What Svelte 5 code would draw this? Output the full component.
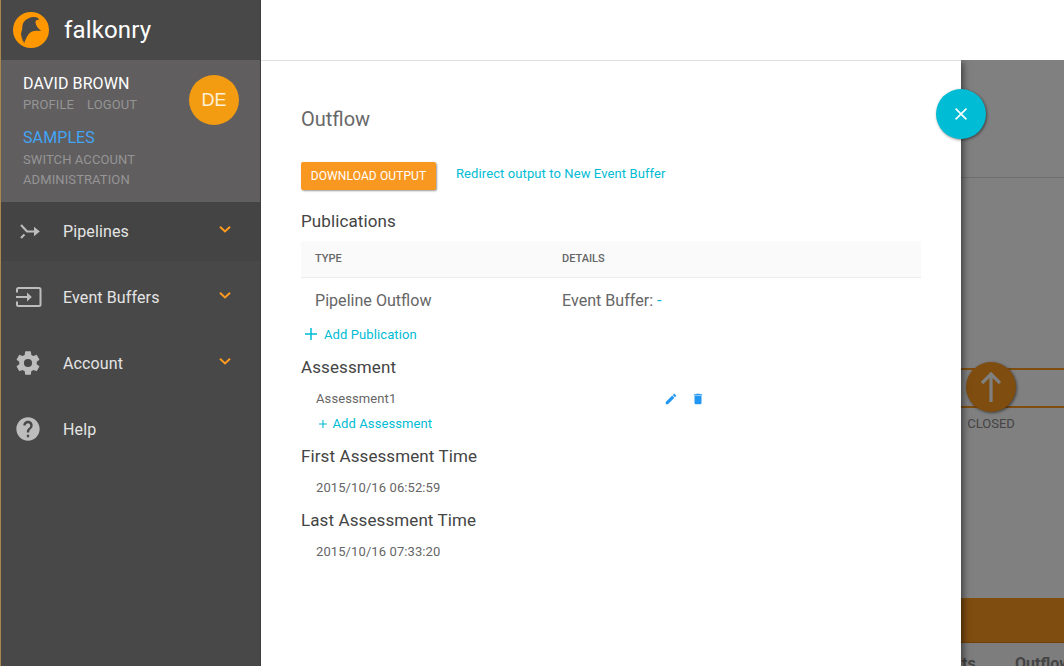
<script>
  const menu = [
    { icon: 'pipelines', label: 'Pipelines', expandable: true, active: true },
    { icon: 'buffers', label: 'Event Buffers', expandable: true },
    { icon: 'account', label: 'Account', expandable: true },
    { icon: 'help', label: 'Help' }
  ];
  const times = [
    { title: 'First Assessment Time', value: '2015/10/16 06:52:59' },
    { title: 'Last Assessment Time', value: '2015/10/16 07:33:20' }
  ];
</script>

<div class="app">
  <aside>
    <div class="brand">
      <svg width="36" height="36" viewBox="0 0 36 36">
        <circle cx="18" cy="18" r="18" fill="#ff9800" />
        <path fill="#484848" d="M8.300 20C10 17 8.500 14.500 10.500 10.500C12.500 7.200 16.500 5.500 20 5C23 4.600 25.800 5.600 26.300 8.300C24.500 7 22.300 8.300 22.500 10.500C22.800 13.500 25 17 28.300 18.700C25 19 21.500 18.300 18.500 19.700C14.500 22 13 26.500 11 31.400L10.300 28.500L9.500 29L9.300 26L8.500 26.300L8.700 23.500L7.900 23.700Z" />
      </svg>
      <span>falkonry</span>
    </div>
    <div class="user">
      <div class="info">
        <div class="name">DAVID BROWN</div>
        <div class="links"><span>PROFILE</span><span>LOGOUT</span></div>
        <div class="account">SAMPLES</div>
        <div class="sub switch">SWITCH ACCOUNT</div>
        <div class="sub admin">ADMINISTRATION</div>
      </div>
      <div class="avatar">DE</div>
    </div>
    <nav>
      {#each menu as item}
        <div class="item" class:active={item.active}>
          <div class="icon">
            {#if item.icon === 'pipelines'}
              <svg width="28" height="28" viewBox="0 0 28 28"><path d="M7 8L13 14.500H20.500M7 21L10.500 17.500" fill="none" stroke="#bdbdbd" stroke-width="2.100" /><path d="M20 9.700L25.800 14.500L20 19.300Z" fill="#bdbdbd" /></svg>
            {:else if item.icon === 'buffers'}
              <svg width="28" height="28" viewBox="0 0 28 28"><path d="M3 9.500V6.500Q3 5 4.500 5H25Q26.500 5 26.500 6.500V21.500Q26.500 23 25 23H4.500Q3 23 3 21.500V18.500M2 14H14" fill="none" stroke="#bdbdbd" stroke-width="2" /><path d="M13 9.500L17.800 14L13 18.500Z" fill="#bdbdbd" /></svg>
            {:else if item.icon === 'account'}
              <svg width="28" height="28" viewBox="0 0 24 24"><path fill="#bdbdbd" d="M19.430 12.980c.040-.320.070-.640.070-.980s-.030-.660-.070-.980l2.110-1.650c.190-.150.240-.420.120-.640l-2-3.460c-.120-.220-.390-.300-.610-.220l-2.490 1c-.520-.400-1.080-.730-1.690-.980l-.380-2.650C14.460 2.180 14.250 2 14 2h-4c-.250 0-.460.180-.490.420l-.380 2.650c-.610.250-1.170.590-1.690.980l-2.490-1c-.230-.090-.490 0-.610.220l-2 3.460c-.130.220-.070.490.120.640l2.110 1.650c-.040.320-.070.650-.070.980s.030.660.070.980l-2.110 1.650c-.190.150-.240.420-.120.640l2 3.460c.120.220.390.300.610.220l2.490-1c.520.400 1.080.730 1.690.980l.380 2.650c.030.240.240.420.490.420h4c.250 0 .460-.180.490-.420l.380-2.650c.610-.250 1.170-.590 1.690-.980l2.490 1c.230.090.490 0 .610-.220l2-3.460c.120-.220.070-.490-.120-.640zM12 15.500a3.500 3.500 0 1 1 0-7 3.500 3.500 0 0 1 0 7z" /></svg>
            {:else}
              <svg width="28" height="28" viewBox="0 0 24 24"><path fill="#bdbdbd" d="M12 2C6.480 2 2 6.480 2 12s4.480 10 10 10 10-4.480 10-10S17.520 2 12 2zm1 17h-2v-2h2v2zm2.070-7.750l-.900.920C13.450 12.900 13 13.500 13 15h-2v-.500c0-1.100.450-2.100 1.170-2.830l1.240-1.260c.370-.360.590-.860.590-1.410 0-1.100-.900-2-2-2s-2 .900-2 2H8c0-2.210 1.790-4 4-4s4 1.790 4 4c0 .880-.360 1.680-.930 2.250z" /></svg>
            {/if}
          </div>
          <span class="label">{item.label}</span>
          {#if item.expandable}
            <svg class="chevron" width="12" height="8" viewBox="0 0 12 8"><path d="M1 1.700L6 6.500L11 1.700" fill="none" stroke="#ff9c20" stroke-width="1.900" /></svg>
          {/if}
        </div>
      {/each}
    </nav>
  </aside>

  <main>
    <header></header>
    <div class="body">
      <section class="panel">
        <h1>Outflow</h1>
        <div class="actions">
          <button>DOWNLOAD OUTPUT</button>
          <span class="redirect">Redirect output to New Event Buffer</span>
        </div>

        <h2 class="publications">Publications</h2>
        <div class="table">
          <div class="tr th"><span>TYPE</span><span>DETAILS</span></div>
          <div class="tr td"><span>Pipeline Outflow</span><span>Event Buffer: <i>-</i></span></div>
        </div>
        <div class="add pub">
          <svg width="12" height="12" viewBox="0 0 12 12"><path d="M6 0V12M0 6H12" stroke="#00bcd4" stroke-width="1.500" /></svg>
          <span>Add Publication</span>
        </div>

        <h2>Assessment</h2>
        <div class="entry">
          <span>Assessment1</span>
          <svg class="pencil" width="14" height="14" viewBox="0 0 24 24"><path fill="#2196f3" d="M3 17.250V21h3.750L17.810 9.940l-3.750-3.750L3 17.250zM20.710 7.040c.390-.390.390-1.020 0-1.410l-2.340-2.340c-.390-.390-1.020-.390-1.410 0l-1.830 1.830 3.750 3.750 1.830-1.830z" /></svg>
          <svg width="14" height="14" viewBox="0 0 24 24"><path fill="#2196f3" d="M6 19c0 1.100.900 2 2 2h8c1.100 0 2-.900 2-2V7H6v12zM19 4h-3.500l-1-1h-5l-1 1H5v2h14V4z" /></svg>
        </div>
        <div class="add assess">
          <svg width="8" height="8" viewBox="0 0 8 8"><path d="M4 0V8M0 4H8" stroke="#00bcd4" stroke-width="1.100" /></svg>
          <span>Add Assessment</span>
        </div>

        {#each times as t}
          <h2 class="time">{t.title}</h2>
          <div class="value">{t.value}</div>
        {/each}

        <div class="close">
          <svg width="12" height="12" viewBox="0 0 12 12"><path d="M.6.6L11.400 11.400M11.400.6L.6 11.400" stroke="#fff" stroke-width="1.600" /></svg>
        </div>
      </section>

      <div class="backdrop">
        <div class="strip"></div>
        <div class="flow">
          <div class="pipe"></div>
          <div class="node">
            <div class="disc">
              <svg width="20" height="30" viewBox="0 0 20 30"><path d="M10 30V2M1 11L10 2L19 11" fill="none" stroke="#808080" stroke-width="3.200" /></svg>
            </div>
            <span>CLOSED</span>
          </div>
        </div>
        <div class="bar"></div>
        <div class="tabs"><span class="t1">ts</span><span>Outflow</span></div>
      </div>
    </div>
  </main>
</div>

<style>
  :global(body) { margin: 0; overflow: hidden; }
  .app { display: flex; width: 1064px; height: 666px; overflow: hidden; font-family: Roboto, sans-serif; background: #fff; white-space: nowrap; }
  aside { box-sizing: border-box; width: 261px; flex: none; background: #484848; border-left: 1px solid #a88850; border-right: 1px solid #3e3e3e; }
  .brand { display: flex; align-items: center; height: 60px; padding-left: 12px; gap: 15px; color: #fff; font-size: 24px; letter-spacing: .15px; }
  .brand svg { flex: none; }
  .user { display: flex; justify-content: space-between; height: 142px; background: #605e5f; padding: 0 21px 0 22px; }
  .info { padding-top: 14px; }
  .name { color: #fff; font-size: 16px; line-height: 20px; letter-spacing: .08px; }
  .links { display: flex; gap: 13px; font-size: 13px; line-height: 20px; color: #969596; padding-top: 1px; letter-spacing: .1px; }
  .account { color: #42a5f5; font-size: 16px; line-height: 20px; margin-top: 13px; letter-spacing: .1px; }
  .sub { font-size: 13px; line-height: 20px; color: #969596; letter-spacing: .1px; }
  .switch { margin-top: 2px; }
  .avatar { width: 50px; height: 50px; margin-top: 15px; border-radius: 50%; background: #f39c12; color: #fdf0d8; font-family: "Liberation Sans", sans-serif; font-size: 18px; line-height: 50px; text-align: center; }
  .item { display: flex; align-items: center; height: 59px; margin-bottom: 7px; color: #e4e4e4; }
  .active { background: #444; }
  .icon { width: 28px; height: 28px; margin: -1px 0 0 13px; }
  .icon svg { display: block; }
  .label { margin-left: 21px; font-size: 16px; flex: 1; letter-spacing: .12px; }
  .chevron { margin: 0 29px 5px 0; }

  main { flex: 1; display: flex; flex-direction: column; min-width: 0; }
  header { height: 60px; }
  .body { flex: 1; display: flex; }
  .panel { position: relative; box-sizing: border-box; width: 700px; flex: none; border-top: 1px solid #e0e0e0; background: #fff; padding: 46px 40px 0; box-shadow: 2px 2px 7px rgba(0,0,0,.55); clip-path: inset(0 -30px 0 0); z-index: 1; }
  h1 { margin: 0; font-weight: 400; font-size: 20px; line-height: 24px; color: #686868; }
  .actions { display: flex; margin-top: 31px; gap: 20px; }
  button { border: 0; border-radius: 2px; width: 135px; height: 28px; padding: 0; background: #f99820; color: #fff; font: 12px Roboto, sans-serif; letter-spacing: .1px; box-shadow: 1px 1px 2px rgba(0,0,0,.4); }
  .redirect { color: #00bcd4; font-size: 13px; line-height: 24px; letter-spacing: .1px; }
  h2 { margin: 0; font-weight: 400; font-size: 17px; line-height: 24px; color: #444; letter-spacing: .1px; }
  .publications { margin-top: 19px; }
  .table { margin-top: 8px; }
  .tr { display: grid; grid-template-columns: 247px 1fr; padding-left: 14px; align-items: center; color: #666; }
  .th { height: 36px; background: #fafafa; border-bottom: 1px solid #ececec; font-size: 11px; font-weight: 500; }
  .th span { padding-bottom: 2px; }
  .td { height: 44px; font-size: 16.100px; }
  i { color: #00bcd4; font-style: normal; }
  .add { display: flex; align-items: center; color: #00bcd4; font-size: 13px; line-height: 20px; letter-spacing: .1px; }
  .pub { gap: 7px; padding: 3px 0 0 4px; margin-bottom: 10px; }
  .pub svg { margin-bottom: 2px; }
  .entry { display: flex; align-items: center; width: 389px; margin: 9px 0 0 15px; height: 20px; font-size: 13px; color: #666; letter-spacing: .1px; }
  .entry span { flex: 1; }
  .pencil { margin-right: 13px; }
  .entry svg { margin-top: 2px; }
  .assess { gap: 6px; margin: 6px 0 0 17.500px; }
  .time { margin-top: 10px; }
  .value { margin: 10px 0 0 15px; padding-bottom: 0; font-size: 13px; line-height: 20px; color: #666; letter-spacing: .1px; }
  .close { position: absolute; right: -25px; top: 28px; width: 50px; height: 50px; border-radius: 50%; background: #00bcd4; box-shadow: 1px 1px 3px rgba(0,0,0,.5); display: flex; align-items: center; justify-content: center; }

  .backdrop { flex: 1; display: flex; flex-direction: column; background: #808080; overflow: hidden; }
  .strip { height: 117px; border-bottom: 1px solid #6e6e6e; }
  .flow { position: relative; height: 420px; box-sizing: border-box; padding-top: 190px; }
  .pipe { box-sizing: border-box; height: 40px; border: solid #7f4d10; border-width: 2px 0; }
  .node { position: absolute; left: 5px; top: 184px; width: 50px; text-align: center; }
  .disc { display: flex; align-items: center; justify-content: center; width: 50px; height: 50px; border-radius: 50%; background: #7f4d10; box-shadow: 1px 1px 3px rgba(0,0,0,.5); }
  .node span { display: block; margin-top: 3px; color: #444; font-size: 13px; line-height: 18px; }
  .bar { box-sizing: border-box; height: 45px; background: #7f4d10; border-bottom: 1px solid #704209; }
  .tabs { display: flex; height: 23px; background: #7d7d7d; color: #444; font-size: 16px; font-weight: 700; line-height: 41px; }
  .t1 { box-sizing: border-box; width: 54px; padding-left: 1px; }
  .tabs span { flex: none; }
</style>
